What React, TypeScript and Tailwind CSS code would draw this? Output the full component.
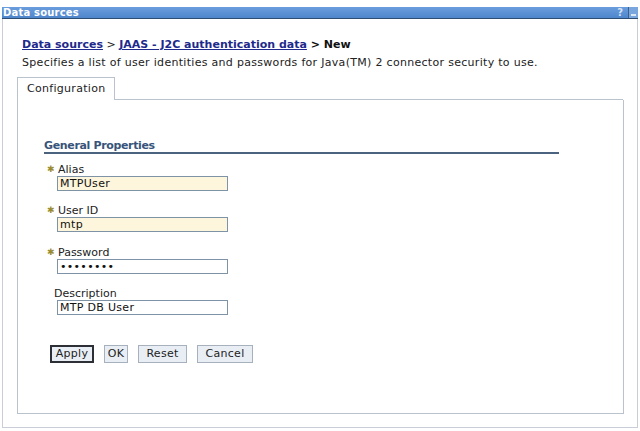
const inputBase =
  'h-[15px] w-[171px] border border-[#7f93a6] px-[2px] text-[11px] leading-[13px] tracking-[0.3px] text-[#111] font-["DejaVu_Sans",sans-serif] outline-none';

function Field({
  label,
  value,
  required,
  tint,
  type = 'text',
  gap,
}: {
  label: string;
  value: string;
  required?: boolean;
  tint?: boolean;
  type?: string;
  gap: string;
}) {
  return (
    <div className={gap}>
      <div className="flex items-center h-[13px] leading-[13px]">
        {required ? (
          <>
            <span className="w-[14px] pl-[3px] text-[9px] text-[#9a8b2e]">✱</span>
            <span>{label}</span>
          </>
        ) : (
          <span className="pl-[10px]">{label}</span>
        )}
      </div>
      <input
        readOnly
        type={type}
        value={value}
        className={`${inputBase} ml-[13px] block ${tint ? 'bg-[#fdf5dc]' : 'bg-white'}`}
      />
    </div>
  );
}

function Button({ label, primary, width }: { label: string; primary?: boolean; width: string }) {
  return (
    <button
      className={`h-[18px] ${width} bg-[#e9eef5] text-[11px] leading-[14px] tracking-[0.3px] text-[#222] ${
        primary ? 'border-2 border-[#2c2f36]' : 'border border-[#a7b1be]'
      }`}
    >
      {label}
    </button>
  );
}

export default function App() {
  return (
    <div className="w-[640px] h-[431px] bg-white pt-[7px] font-['DejaVu_Sans',sans-serif] text-[11px] text-[#222]">
      <div className="mx-[2px] h-[12px] bg-gradient-to-b from-[#6a9ddd] to-[#4f86cc] border-b border-[#2d4d73] flex items-center justify-between pl-[1px]">
        <span className="text-white font-bold text-[10px] leading-[11px] tracking-[0.2px]">Data sources</span>
        <div className="flex items-center h-full">
          <span className="text-[#d4e2f3] font-bold text-[10px] leading-[11px] mr-[5px]">?</span>
          <span className="w-[10px] h-full bg-[#7aa6de] border-l border-[#3b5f8c] flex items-end justify-center pb-[2px]">
            <span className="w-[5px] h-[2px] bg-[#dde8f5]" />
          </span>
        </div>
      </div>

      <div className="mx-[2px] h-[409px] border border-t-0 border-[#c9ced6] px-[14px]">
        <div className="pl-[5px] pt-[19px] leading-[14px]">
          <a className="font-bold underline text-[#1e2a8c]">Data sources</a>
          <span> &gt; </span>
          <a className="font-bold underline text-[#1e2a8c]">JAAS - J2C authentication data</a>
          <span className="font-bold text-[#111]"> &gt; New</span>
        </div>
        <div className="pl-[5px] pt-[4px] leading-[14px] tracking-[0.3px]">
          Specifies a list of user identities and passwords for Java(TM) 2 connector security to use.
        </div>

        <div className="mt-[7px] flex">
          <div className="h-[23px] w-[98px] border border-b-0 border-[#b9c2cd] pl-[9px] flex items-center tracking-[0.3px]">
            Configuration
          </div>
          <div className="w-[509px] border-b border-[#b9c2cd]" />
        </div>

        <div className="w-[607px] h-[314px] border border-t-0 border-[#b9c2cd] pl-[26px] pt-[40px]">
          <div className="w-[515px] border-b-2 border-[#4c6380] font-bold text-[#37547a] leading-[12px] tracking-[-0.35px]">
            General Properties
          </div>

          <Field label="Alias" value="MTPUser" required tint gap="mt-[9px]" />
          <Field label="User ID" value="mtp" required tint gap="mt-[13px]" />
          <Field label="Password" value="password" type="password" required gap="mt-[14px]" />
          <Field label="Description" value="MTP DB User" gap="mt-[13px]" />

          <div className="mt-[30px] ml-[6px] flex gap-[10px]">
            <Button label="Apply" primary width="w-[44px]" />
            <Button label="OK" width="w-[24px]" />
            <Button label="Reset" width="w-[49px]" />
            <Button label="Cancel" width="w-[56px]" />
          </div>
        </div>
      </div>
    </div>
  );
}
